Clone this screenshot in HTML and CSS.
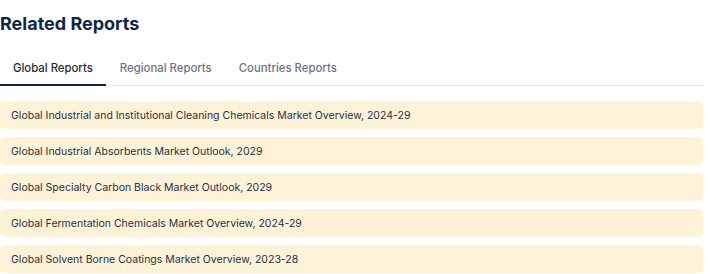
FILE: index.html
```html
<!DOCTYPE html>
<html lang="en">
<head>
  <meta charset="UTF-8">
  <title>Related Reports</title>
  <meta name="viewport" content="width=device-width, initial-scale=1.0">
  <link rel="stylesheet" href="styles.css">
</head>
<body>
  <div class="related">
    <h2>Related Reports</h2>
    <div class="tabs">
      <a class="tab active">Global Reports</a>
      <a class="tab">Regional Reports</a>
      <a class="tab">Countries Reports</a>
    </div>
    <ul class="report-list">
      <li><a>Global Industrial and Institutional Cleaning Chemicals Market Overview, 2024-29</a></li>
      <li><a>Global Industrial Absorbents Market Outlook, 2029</a></li>
      <li><a>Global Specialty Carbon Black Market Outlook, 2029</a></li>
      <li><a>Global Fermentation Chemicals Market Overview, 2024-29</a></li>
      <li><a>Global Solvent Borne Coatings Market Overview, 2023-28</a></li>
    </ul>
  </div>
</body>
</html>
```

FILE: styles.css
```css
body { margin:0; background:#fff; font-family:Inter,'Liberation Sans',Arial,sans-serif; }
.related { width:703px; }
h2 { margin:0; padding-top:11px; font-size:18px; line-height:26px; font-weight:700; color:#0f2744; }
.tabs { display:flex; gap:1px; margin-top:20px; border-bottom:1px solid #e5e7eb; }
.tab { box-sizing:border-box; padding:0 13px; height:28px; line-height:22px; font-size:11.35px; font-weight:500; color:#6b7489; cursor:pointer; }
.tab.active { color:#1f2937; height:29px; margin-bottom:-1px; border-bottom:2px solid #0f2744; }
.report-list { list-style:none; margin:15px 0 0; padding:0; display:flex; flex-direction:column; gap:8px; }
.report-list li { background:#fef3d8; border-radius:5px; height:28px; display:flex; align-items:center; padding:0 11px; }
.report-list a { font-size:10.5px; color:#27303f; cursor:pointer; }
```
